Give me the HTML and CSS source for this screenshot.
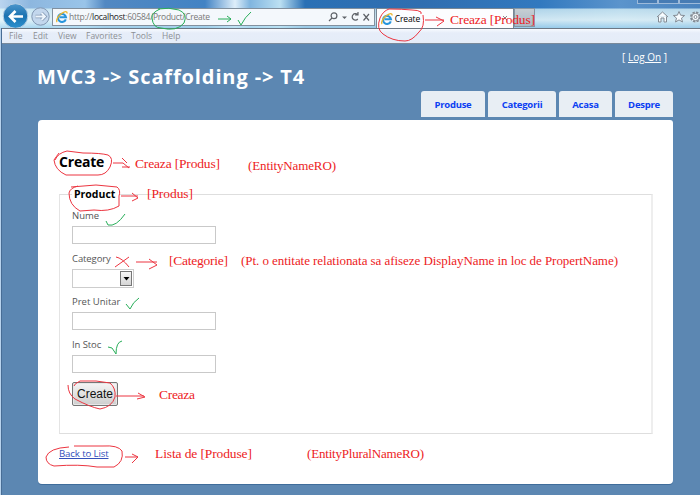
FILE: index.html
```html
<!DOCTYPE html>
<html lang="ro">
<head>
<meta charset="utf-8">
<title>Create</title>
<link rel="stylesheet" href="styles.css">
</head>
<body>
<div class="window">
  <header class="chrome">
    <svg class="nav-buttons" width="52" height="28" viewBox="0 0 52 28">
      <defs>
        <linearGradient id="backfill" x1="0" y1="0" x2="0" y2="1"><stop offset="0" stop-color="#4d96cc"/><stop offset=".5" stop-color="#1b73b1"/><stop offset="1" stop-color="#2d91cf"/></linearGradient>
      </defs>
      <circle cx="40.500" cy="16.500" r="8.700" fill="#c3d7ed" stroke="#8197b2"/>
      <path d="M35.500 16.500H45M41.500 13L45 16.500L41.500 20" fill="none" stroke="#8299b5" stroke-width="3.400"/>
      <path d="M35.500 16.500H45M41.500 13L45 16.500L41.500 20" fill="none" stroke="#edf5fc" stroke-width="1.800"/>
      <circle cx="15.500" cy="16" r="12.300" fill="url(#backfill)" stroke="#b7cfe5"/>
      <path d="M23 16.500H10.500M15.500 11L10 16.500L15.500 22" fill="none" stroke="#fff" stroke-width="2.700"/>
    </svg>
    <div class="address">
      <svg class="ie" width="12" height="12" viewBox="0 0 12 12"><path d="M9.800 8.300A4 4 0 1 1 10 6.300H3.500" fill="none" stroke="#2795dc" stroke-width="2.100"/><path d="M1.200 11C-.5 9.500 2.500 3.500 7.500 1.300C10 .2 11.400 .6 10.900 2.500" fill="none" stroke="#e9b62f" stroke-width="1.300"/></svg>
      <span class="url">http://<b>localhost</b>:60584/Product/Create</span>
      <svg class="tools" width="44" height="14" viewBox="0 0 44 14"><g fill="none" stroke="#5e6268" stroke-width="1.200"><circle cx="6" cy="5.700" r="2.900"/><path d="M4 8L1 11M29.500 4.500A3.200 3.200 0 1 0 29.800 9M27 5H30V2M35.500 4L41 10.500M41 4L35.500 10.500"/></g><path d="M14 6.500h5l-2.500 2.500z" fill="#5e6268"/></svg>
    </div>
    <div class="browser-tab">
      <svg class="ie" width="12" height="12" viewBox="0 0 12 12"><path d="M9.800 8.300A4 4 0 1 1 10 6.300H3.500" fill="none" stroke="#2795dc" stroke-width="2.100"/><path d="M1.200 11C-.5 9.500 2.500 3.500 7.500 1.300C10 .2 11.400 .6 10.900 2.500" fill="none" stroke="#e9b62f" stroke-width="1.300"/></svg>
      <span class="tab-title">Create</span>
      <svg class="tab-close" width="6" height="6" viewBox="0 0 6 6"><path d="M1 1l4 4M5 1L1 5" stroke="#888"/></svg>
    </div>
    <div class="new-tab"></div>
    <svg class="commands" width="44" height="14" viewBox="0 0 44 14"><g fill="#f8fcff" stroke="#838b94"><path d="M1 7L6.500 2L12 7M2.500 6.500V12H5V8H8V12H10.500V6.500"/><path d="M23 1.500L24.600 5.200L28.600 5.500L25.500 8.100L26.500 12L23 9.900L19.500 12L20.500 8.100L17.400 5.500L21.400 5.200Z"/><circle cx="39.500" cy="7" r="4.500" stroke-width="2" stroke-dasharray="2.300 1.230"/><circle cx="39.500" cy="7" r="3.700"/><circle cx="39.500" cy="7" r="1.500"/></g></svg>
    <div class="window-controls"><i></i><i></i><i></i></div>
  </header>
  <nav class="menubar"><span class="m1">File</span><span class="m2">Edit</span><span class="m3">View</span><span class="m4">Favorites</span><span class="m5">Tools</span><span class="m6">Help</span></nav>
  <div class="page">
    <div class="login">[ <a>Log On</a> ]</div>
    <div class="heading">
      <h1>MVC3 -&gt; Scaffolding -&gt; T4</h1>
      <nav class="site-menu"><a class="t1">Produse</a><a class="t2">Categorii</a><a class="t3">Acasa</a><a class="t4">Despre</a></nav>
    </div>
    <main class="content">
      <h2>Create</h2>
      <section class="group">
        <div class="legend">Product</div>
        <div class="field"><span class="label l1">Nume</span><div class="input"></div></div>
        <div class="field"><span class="label l2">Category</span><div class="select"><div class="arrow"><svg width="7" height="4" viewBox="0 0 7 4"><path d="M.5 0h6L3.500 3.500z"/></svg></div></div></div>
        <div class="field"><span class="label l3">Pret Unitar</span><div class="input"></div></div>
        <div class="field"><span class="label l4">In Stoc</span><div class="input"></div></div>
        <div class="submit">Create</div>
      </section>
      <a class="back">Back to List</a>
    </main>
  </div>
  <svg class="notes" width="700" height="495" viewBox="0 0 700 495">
    <g class="red">
      <path d="M389 9Q402 9 412 10Q418 10 421 12V14M423 15Q425 27 419 32Q412 41 405 41Q392 41 383 34Q376 29 380 18Q383 11 389 9M425 20H444M436 17L444 21L437 26"/>
      <path d="M59 153Q56 157 54 160Q55 170 66 175H98Q106 175 110 167Q114 158 108 155Q101 153 83 153L67 151Q58 153 55 160M113 163H123L129 168M122 158L127 163M122 167H130"/>
      <path d="M71 187L96 185L117 187Q121 190 119 196V206Q109 212 94 210L80 211Q69 205 69 193Q70 188 78 186M121 196H138M132 193L138 198L132 201"/>
      <path d="M116 257Q122 258 129 267M129 257L115 267M136 262H157M149 259L157 265L149 269"/>
      <path d="M68 385Q68 394 75 399Q90 407 100 409Q112 407 115 397Q116 388 110 383Q97 380 80 381Q74 384 74 386M116 396H144M138 393L145 397L137 399"/>
      <path d="M69 447Q49 448 46 457Q46 464 54 466Q80 464 97 467H114Q124 462 122 451Q118 445 103 446H74M125 457H138M132 454L138 457L132 463"/>
    </g>
    <g class="green">
      <path d="M160 9Q151 13 152 18Q153 28 161 28Q177 32 184 23Q188 14 179 10Q169 7 158 9M218 19H231M227 16L231 19L227 22M238 20L241 25Q245 17 251 12"/>
      <path d="M106 221L108 225Q116 227 125 214M126 304L130 309Q133 302 139 298M108 347L112 348L116 354Q116 342 122 341"/>
    </g>
    <g class="words">
      <text x="450" y="24" textLength="85">Creaza [Produs]</text>
      <text x="135" y="168" textLength="85">Creaza [Produs]</text>
      <text class="small" x="248" y="170" textLength="88">(EntityNameRO)</text>
      <text x="147" y="198" textLength="46">[Produs]</text>
      <text x="169" y="265" textLength="59">[Categorie]</text>
      <text class="small" x="241" y="265" textLength="377">(Pt. o entitate relationata sa afiseze DisplayName in loc de PropertName)</text>
      <text x="159" y="399" textLength="36">Creaza</text>
      <text x="155" y="458" textLength="97">Lista de [Produse]</text>
      <text class="small" x="307" y="458" textLength="117">(EntityPluralNameRO)</text>
    </g>
  </svg>
</div>
</body>
</html>
```
FILE: styles.css
```css
* { box-sizing: border-box; }
body { margin: 0; font-family: "Open Sans", "Noto Sans", sans-serif; overflow: hidden; }
svg { flex: none; display: block; }
.window { position: relative; width: 700px; height: 495px; overflow: hidden; background: #5c87b2; }
.chrome {
  position: relative; display: flex; height: 28px;
  background:
    linear-gradient(180deg, rgba(255,255,255,0) 0 8px, rgba(225,248,250,.72) 9px, rgba(237,251,252,.85) 20px, rgba(175,222,244,.8) 28px),
    linear-gradient(90deg, #bad4ef 0, #8db7df 30px, #99c4e9 85px, #5288c2 105px, #4283c4 205px, #deeefa 235px, #80b5df 250px, #bce0f2 280px, #2a70b5 305px, #306eb0 420px, #3279bf 540px, #5b94cc 620px, #4a83be 700px);
}
.address { display: flex; align-items: center; width: 324px; height: 18px; margin-top: 8px; padding-left: 3px; background: #f4f8fc; border: 1px solid #82909e; }
.url { width: 266px; margin-left: 1px; color: #777; font-size: 8.500px; letter-spacing: -.27px; line-height: 16px; white-space: nowrap; }
.url b { color: #222; font-weight: 400; }
.tools { margin-left: -7px; }
.browser-tab { display: flex; align-items: center; width: 139px; height: 20px; margin: 8px 0 0 1px; padding: 0 4px; background: #fcfdff; border: 1px solid #788795; border-bottom: 0; }
.tab-title { margin-left: 2px; color: #000; font-size: 8.500px; letter-spacing: -.1px; }
.tab-close { margin: 0 1px 2px auto; }
.new-tab { width: 21px; height: 19px; margin-top: 8px; border: 1px solid #8696a3; background: linear-gradient(#c6ced4, #a9b9c6); }
.commands { margin: 10px 0 0 121px; }
.window-controls { position: absolute; top: 0; left: 637px; display: flex; }
.window-controls i { width: 21px; height: 4px; border: 1px solid #9dbada; border-top: 0; background: #477cb4; }
.window-controls i:last-child { width: 25px; }
.menubar { display: flex; align-items: center; height: 16px; margin-left: 1px; padding-left: 8px; background: linear-gradient(#f7faff, #e6edf9 4px, #e5edf8); border-top: 1px solid #6d7885; border-bottom: 1px solid #79899a; color: #8c8f94; font-size: 8.500px; line-height: 14px; }
.menubar span { flex: none; white-space: nowrap; }
.m1 { width: 24px; } .m2 { width: 25px; } .m3 { width: 28px; } .m4 { width: 45px; } .m5 { width: 31px; }
.page { height: 451px; margin-left: 2px; padding: 0 27px 0 36px; background: #5c87b2; }
.window::before { content: ""; position: absolute; top: 28px; left: 0; width: 2px; height: 467px; background: linear-gradient(90deg, #b8d3ed 50%, #486d95 50%); }
.login { height: 26px; margin-right: 6px; padding-top: 5px; color: #fff; font-size: 10px; line-height: 16px; text-align: right; }
.login a { text-decoration: underline; }
.heading { display: flex; justify-content: space-between; height: 50px; }
h1 { margin: -7px 0 0 -1px; color: #fff; font-size: 20px; line-height: 28px; letter-spacing: .88px; white-space: nowrap; }
.site-menu { display: flex; align-items: flex-start; gap: 3px; padding-top: 21px; }
.site-menu a { height: 26px; border-radius: 3px 3px 0 0; background: #e8eef4; color: #0c3ff2; font-size: 9.500px; font-weight: 700; line-height: 27px; letter-spacing: -.25px; text-align: center; }
.t1 { width: 64px; } .t2 { width: 68px; } .t3 { width: 53px; } .t4 { width: 58px; }
.content { height: 364px; padding: 32px 20px 0 21px; background: #fff; border-radius: 4px 3px 4px 4px; box-shadow: 0 1px #3f6d9b; }
h2 { height: 42px; margin: 0; color: #000; font-size: 14px; line-height: 19px; letter-spacing: -.2px; }
.group { height: 240px; padding: 0 0 0 12px; border: 1px solid #e0e0e0; border-right-width: 2px; border-color: #dedede #eee #dedede #e4e4e4; }
.legend { width: 47px; height: 14px; margin: -8px 0 7px; padding: 0 2px; background: #fff; color: #000; font-size: 10.500px; font-weight: 700; line-height: 15px; }
.field { height: 43px; }
.label { display: block; height: 18px; color: #555; font-size: 9.500px; line-height: 15px; }
.l2, .l4 { letter-spacing: -.1px; }
.input { width: 144px; height: 18px; background: #fff; border: 1px solid #c9c9c9; }
.select { display: flex; justify-content: flex-end; width: 62px; height: 19px; padding: 1px; border: 1px solid #cdcdcd; }
.arrow { display: flex; align-items: center; justify-content: center; width: 12px; height: 15px; border: 1px solid #777; background: linear-gradient(#f6f6f6, #d5d5d5); }
.submit { width: 46px; height: 24px; margin-top: 2px; border: 1px solid #767676; border-radius: 2px; background: linear-gradient(#f5f5f5, #cecece); box-shadow: inset 0 0 0 1px #e7e7e7; color: #111; font: 12px/22px "Liberation Sans", sans-serif; text-align: center; }
.back { display: inline-block; margin-top: 13px; color: #3450bb; font-size: 9.700px; line-height: 14px; letter-spacing: -.15px; text-decoration: underline; }
.notes { position: absolute; inset: 0; pointer-events: none; }
.red, .green { fill: none; stroke: #ec3540; stroke-width: 1; stroke-linejoin: round; }
.green { stroke: #28ae59; }
.words { fill: #ed1c24; font-family: "Liberation Serif", serif; font-size: 13.500px; }
.small { font-size: 13px; }
```
